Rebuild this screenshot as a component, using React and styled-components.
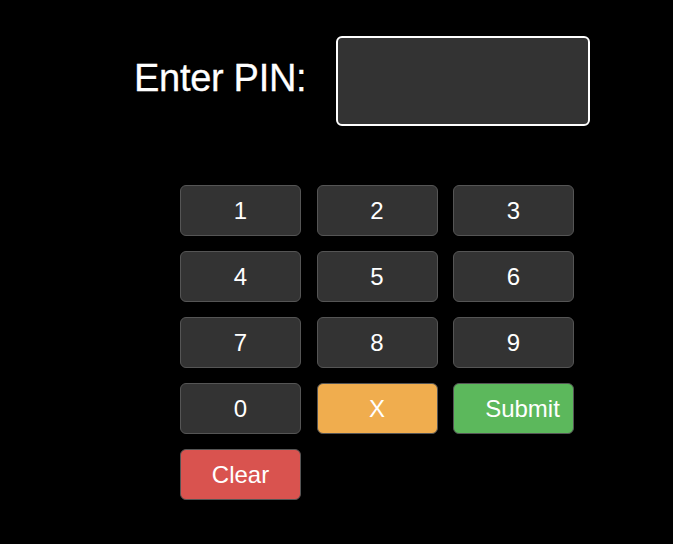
import React, { useState } from "react";
import styled, { createGlobalStyle } from "styled-components";

const GlobalStyle = createGlobalStyle`
  body {
    margin: 0;
    background: #000;
    font-family: "Liberation Sans", Arial, sans-serif;
  }
`;

const Page = styled.div`
  display: flex;
  flex-direction: column;
  padding: 36px 0 0 134px;
  min-height: 100vh;
  box-sizing: border-box;
`;

const Header = styled.div`
  display: flex;
  align-items: center;
`;

const Label = styled.label`
  color: #fff;
  font-size: 38px;
  letter-spacing: -0.3px;
  margin-right: 30px;
  padding-bottom: 5px;
  -webkit-text-stroke: 0.3px #fff;
`;

const PinInput = styled.input`
  width: 254px;
  height: 90px;
  box-sizing: border-box;
  background: #333;
  border: 2px solid #fff;
  border-radius: 6px;
  color: #fff;
  font-size: 32px;
  font-family: inherit;
  text-align: center;
  outline: none;
`;

const Keypad = styled.div`
  display: grid;
  grid-template-columns: repeat(3, 121px);
  grid-auto-rows: 51px;
  column-gap: 15.5px;
  row-gap: 15px;
  margin: 59px 0 0 46px;
`;

const colors = {
  digit: "#333",
  back: "#f0ad4e",
  submit: "#5cb85c",
  clear: "#d9534f",
};

const Key = styled.button`
  background: ${(p) => colors[p.$kind || "digit"]};
  border: 1px solid #555;
  border-radius: 6px;
  color: #fff;
  font-family: inherit;
  font-size: 24px;
  padding: 0 0 0 ${(p) => (p.$kind === "submit" ? "18px" : "0")};
  cursor: pointer;
`;

function App() {
  const [pin, setPin] = useState("");

  const press = (d) => setPin((p) => p + d);

  return (
    <Page>
      <GlobalStyle />
      <Header>
        <Label htmlFor="pin">Enter PIN:</Label>
        <PinInput id="pin" type="password" value={pin} readOnly />
      </Header>
      <Keypad>
        {["1", "2", "3", "4", "5", "6", "7", "8", "9", "0"].map((d) => (
          <Key key={d} onClick={() => press(d)}>
            {d}
          </Key>
        ))}
        <Key $kind="back" onClick={() => setPin((p) => p.slice(0, -1))}>
          X
        </Key>
        <Key $kind="submit">Submit</Key>
        <Key $kind="clear" onClick={() => setPin("")}>
          Clear
        </Key>
      </Keypad>
    </Page>
  );
}

export default App;
